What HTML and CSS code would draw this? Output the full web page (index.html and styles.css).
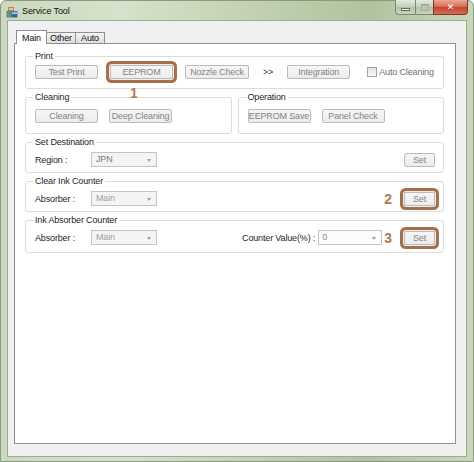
FILE: index.html
```html
<!DOCTYPE html>
<html>
<head>
<meta charset="utf-8">
<link rel="stylesheet" href="styles.css">
</head>
<body>
<div class="window">
  <div class="titlebar">
    <svg class="app-icon" width="12" height="12" viewBox="0 0 12 12">
      <rect x="2" y="1" width="6" height="4" fill="#d9784a"/>
      <rect x="3" y="2" width="4" height="2" fill="#f3c29a"/>
      <rect x="0.5" y="5" width="11" height="6.5" fill="#4a78b8"/>
      <rect x="1" y="6" width="4" height="5" fill="#5aa04a"/>
      <rect x="6" y="6" width="5" height="2" fill="#8fb8e8"/>
      <rect x="6" y="9" width="5" height="2" fill="#2f5e9e"/>
    </svg>
    <span class="title">Service Tool</span>
    <div class="caption">
      <span class="cap cap-min"><span class="min-bar"></span></span>
      <span class="cap cap-max"><span class="max-box"></span></span>
      <span class="cap cap-close">✕</span>
    </div>
  </div>
  <div class="client">
    <div class="tabs">
      <span class="tab active">Main</span>
      <span class="tab">Other</span>
      <span class="tab">Auto</span>
    </div>
    <div class="panel">
      <fieldset class="group g-print">
        <legend>Print</legend>
        <div class="row print-row">
          <span class="btn">Test Print</span>
          <span class="btn hl anchor">EEPROM<span class="num num-1">1</span></span>
          <span class="btn w64">Nozzle Check</span>
          <span class="arrows">&gt;&gt;</span>
          <span class="btn">Integration</span>
          <span class="check"><span class="box"></span>Auto Cleaning</span>
        </div>
      </fieldset>
      <div class="split">
        <fieldset class="group g-tall">
          <legend>Cleaning</legend>
          <div class="row row-11">
            <span class="btn">Cleaning</span>
            <span class="btn">Deep Cleaning</span>
          </div>
        </fieldset>
        <fieldset class="group g-tall">
          <legend>Operation</legend>
          <div class="row row-11">
            <span class="btn">EEPROM Save</span>
            <span class="btn">Panel Check</span>
          </div>
        </fieldset>
      </div>
      <fieldset class="group g-combo">
        <legend>Set Destination</legend>
        <div class="row">
          <span class="label">Region :</span>
          <span class="combo dark">JPN<span class="arrow"></span></span>
          <span class="right">
            <span class="btn small">Set</span>
          </span>
        </div>
      </fieldset>
      <fieldset class="group g-combo">
        <legend>Clear Ink Counter</legend>
        <div class="row">
          <span class="label">Absorber :</span>
          <span class="combo">Main<span class="arrow"></span></span>
          <span class="right">
            <span class="num">2</span>
            <span class="btn small hl">Set</span>
          </span>
        </div>
      </fieldset>
      <fieldset class="group g-combo g-last">
        <legend>Ink Absorber Counter</legend>
        <div class="row">
          <span class="label">Absorber :</span>
          <span class="combo">Main<span class="arrow"></span></span>
          <span class="right">
            <span class="label-cv">Counter Value(%) :</span>
            <span class="combo cv">0<span class="arrow"></span></span>
            <span class="num num-3">3</span>
            <span class="btn small hl">Set</span>
          </span>
        </div>
      </fieldset>
    </div>
  </div>
</div>
</body>
</html>
```

FILE: styles.css
```css
* { box-sizing: border-box; }
html, body { margin: 0; padding: 0; background: #fff; }
body {
  font-family: "Liberation Sans", Arial, sans-serif;
  font-size: 9px;
  letter-spacing: -0.15px;
  color: #1e1e1e;
}
.window {
  width: 474px;
  height: 462px;
  display: flex;
  flex-direction: column;
  background: linear-gradient(to right, #cad9bd 0%, #d6e2cb 25%, #c1d1b0 55%, #b0c39e 78%, #c8d7b9 100%);
  border: 1px solid #8a9984;
  border-radius: 6px 6px 0 0;
}
.titlebar {
  height: 19px;
  display: flex;
  align-items: flex-start;
  padding-left: 5px;
}
.app-icon { margin-top: 5px; }
.title {
  margin-top: 4px;
  margin-left: 4px;
  font-size: 9px;
  letter-spacing: -0.1px;
  color: #111;
  line-height: 12px;
}
.caption {
  margin-left: auto;
  margin-right: 5px;
  display: flex;
  margin-top: -1px;
}
.cap {
  height: 15px;
  display: flex;
  align-items: center;
  justify-content: center;
  border: 1px solid #7a8772;
  border-top: none;
}
.cap-min {
  width: 20px;
  border-radius: 0 0 0 4px;
  background: linear-gradient(#e2eadb, #c3cfb8 50%, #b3c1a6 51%, #c8d4bc);
  border-right: none;
}
.cap-max {
  width: 18px;
  background: linear-gradient(#e2eadb, #c3cfb8 50%, #b3c1a6 51%, #c8d4bc);
  border-right: none;
}
.cap-close {
  width: 35px;
  border-radius: 0 0 4px 0;
  background: linear-gradient(#eaa896, #d6684f 50%, #c4432b 51%, #d66d54);
  border-color: #7b3a2f;
  color: #fff;
  font-size: 9px;
  font-weight: bold;
  font-family: "DejaVu Sans", sans-serif;
}
.min-bar {
  width: 9px;
  height: 3px;
  background: #f4f4f4;
  border: 1px solid #66715f;
  margin-top: 5px;
}
.max-box {
  width: 8px;
  height: 7px;
  border: 1px solid #a3ad9b;
  border-top-width: 2px;
}
.client {
  flex: 1;
  margin: 0 6px 4px 6px;
  background: #f0f0f0;
  border: 1px solid #9aab92;
  display: flex;
  flex-direction: column;
}
.tabs {
  display: flex;
  align-items: flex-end;
  height: 22px;
  padding-left: 8px;
}
.tab {
  height: 11px;
  line-height: 10px;
  width: 29px;
  text-align: center;
  border: 1px solid #8d9096;
  border-bottom: none;
  border-left: none;
  background: linear-gradient(#f3f3f3, #dedede);
  color: #111;
}
.tab.active {
  height: 14px;
  width: 31px;
  padding-top: 2px;
  background: #fff;
  border-left: 1px solid #8d9096;
  margin-bottom: -1px;
  position: relative;
  z-index: 1;
}
.panel {
  flex: 1;
  margin: 0 10px 12px 6px;
  background: #fff;
  border: 1px solid #8d9096;
  padding: 6px 11px 0 10px;
  display: flex;
  flex-direction: column;
  gap: 2px;
}
.group {
  margin: 0;
  border: 1px solid #dcdcdc;
  border-radius: 3px;
  padding: 3px 8px 9px 9px;
  min-width: 0;
}
.group legend {
  padding: 0 2px;
  margin-left: -2px;
  line-height: 12px;
  color: #1e1e1e;
}
.g-tall { padding-top: 5px; padding-bottom: 10px; }
.g-combo { padding-top: 4px; padding-bottom: 5px; }
.g-last { padding-bottom: 7px; }
.split {
  display: grid;
  grid-template-columns: 1fr 1fr;
  gap: 6px;
}
.row {
  display: flex;
  align-items: center;
  gap: 12px;
  height: 15px;
}
.row-11 { gap: 11px; }
.print-row { height: 14px; }
.btn {
  width: 63px;
  height: 14px;
  border: 1px solid #b9bcbf;
  border-radius: 2px;
  background: linear-gradient(#f6f6f6, #ececec);
  color: #848484;
  display: inline-flex;
  align-items: center;
  justify-content: center;
  white-space: nowrap;
  flex: none;
}
.btn.w64 { width: 64px; }
.btn.small { width: 31px; }
.hl {
  box-shadow: 0 0 0 1px #f4ece6, 0 0 0 4px #a3704b;
}
.anchor { position: relative; }
.num {
  color: #b07a4f;
  font-weight: bold;
  font-size: 14px;
  line-height: 14px;
  letter-spacing: 0;
}
.num-1 {
  position: absolute;
  left: 19px;
  top: 20px;
}
.arrows {
  padding: 0 2px;
  color: #333;
}
.check {
  display: inline-flex;
  align-items: center;
  margin-left: 5px;
  color: #6f6f6f;
  white-space: nowrap;
}
.box {
  width: 10px;
  height: 10px;
  border: 1px solid #a0a0a0;
  background: linear-gradient(#e6e6e6, #f8f8f8);
  margin-right: 2px;
}
.label {
  width: 44px;
  flex: none;
  white-space: nowrap;
}
.combo {
  position: relative;
  width: 66px;
  height: 15px;
  border: 1px solid #c4c4c4;
  background: #f4f4f4;
  color: #a0a0a0;
  padding-left: 4px;
  line-height: 13px;
  flex: none;
}
.combo.dark { color: #7a7a7a; }
.combo.cv {
  width: 64px;
  margin-left: -9px;
  background: #fbfbfb;
  color: #8a8a8a;
  padding-left: 3px;
}
.arrow {
  position: absolute;
  right: 5px;
  top: 6px;
  width: 0;
  height: 0;
  border-left: 2.5px solid transparent;
  border-right: 2.5px solid transparent;
  border-top: 3px solid #a0a0a0;
}
.right {
  margin-left: auto;
  display: flex;
  align-items: center;
  gap: 12px;
}
.label-cv { white-space: nowrap; }
.num-3 { margin-left: -10px; }
```
